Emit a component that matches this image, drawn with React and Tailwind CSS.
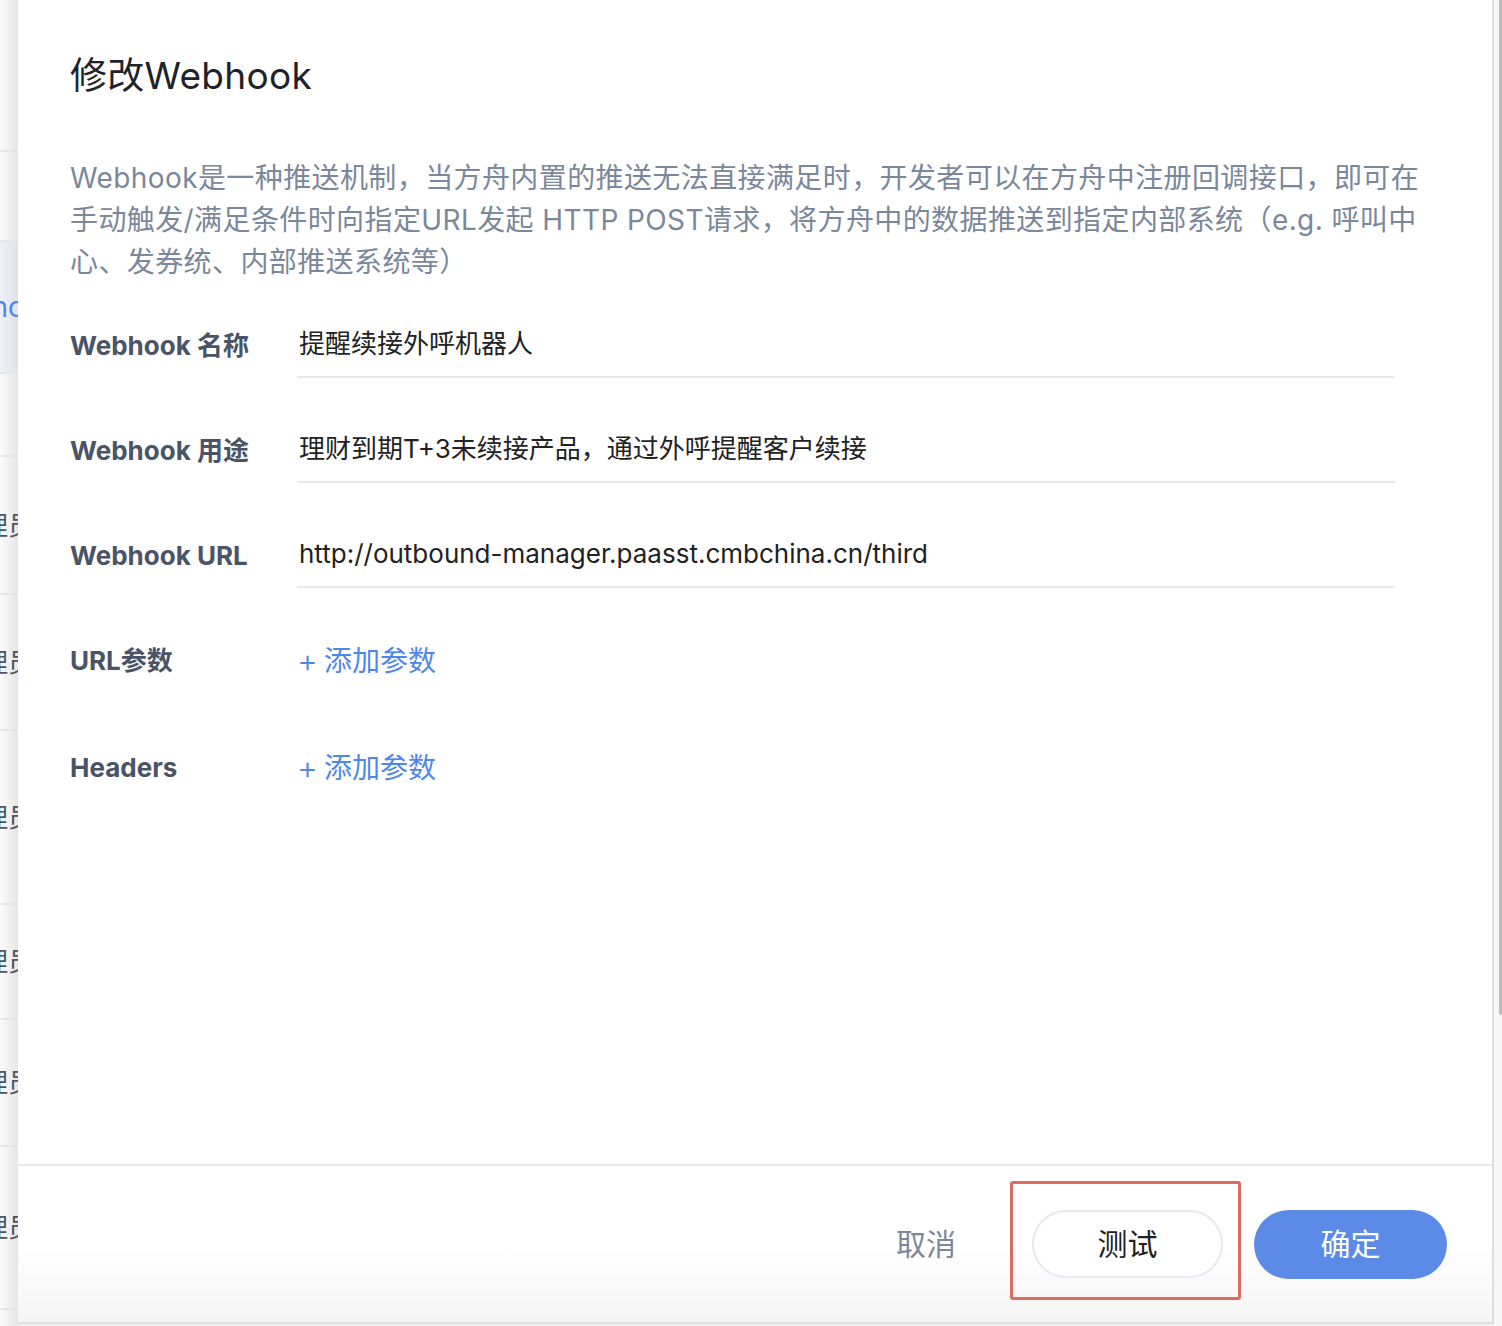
const font = { fontFamily: 'Inter, "Noto Sans CJK SC", sans-serif' };

const sideRows = [
  { h: "h-[150px]" },
  { h: "h-[90px]" },
  { h: "h-[132px]", text: "Func", active: true },
  { h: "h-[83px]" },
  { h: "h-[138px]", text: "管理员" },
  { h: "h-[136px]", text: "管理员" },
  { h: "h-[174px]", text: "管理员" },
  { h: "h-[115px]", text: "管理员" },
  { h: "h-[127px]", text: "管理员" },
  { h: "h-[163px]", text: "管理员" },
  { h: "h-[18px]" },
];

function SideStrip() {
  return (
    <div className="w-[18px] shrink-0 overflow-hidden flex flex-col">
      {sideRows.map((r, i) => (
        <div
          key={i}
          className={`${r.h} shrink-0 flex items-center ${i > 0 ? "border-t-2 border-[#e4e6ea]" : ""} ${
            r.active
              ? "bg-linear-to-r from-[#eef1f6] to-[#dfe2e7]"
              : "bg-linear-to-r from-[#fbfbfb] to-[#e6e6e7]"
          }`}
        >
          {r.text && (
            <div className="w-[234px] -ml-[200px] shrink-0 text-right">
              <span
                className={`whitespace-nowrap ${
                  r.active ? "text-[28px] text-[#4f86ec] pr-[10px]" : "text-[26px] text-[#4b5563]"
                }`}
              >
                {r.text}
              </span>
            </div>
          )}
        </div>
      ))}
    </div>
  );
}

function Row({ label, children, underline = true }) {
  return (
    <div className="flex w-[1325px] mt-[51px] first:mt-0">
      <div className="w-[227px] shrink-0 text-[26px] leading-[40px] pt-[2px] font-bold text-[#4a5466]">{label}</div>
      <div
        className={`flex-1 pl-[2px] pb-[12px] border-b-2 ${
          underline ? "border-[#e6e9ee]" : "border-transparent"
        }`}
      >
        {children}
      </div>
    </div>
  );
}

function AddParam() {
  return (
    <button className="flex items-center h-[40px] mt-[2px] text-[28px] leading-[40px] text-[#4f86ec] -ml-[2px]">
      <span className="text-[32px] leading-none font-light mr-[6px]">+</span>添加参数
    </button>
  );
}

export default function App() {
  return (
    <div className="flex h-[1326px] w-full bg-[#efefef] overflow-hidden" style={font}>
      <SideStrip />

      <div className="flex-1 flex flex-col h-[1324px] bg-white border-r-2 border-b-2 border-[#dedede]">
        {/* body */}
        <div className="flex-1 pl-[52px] pt-[52px]">
          <h1 className="text-[37px] leading-[48px] tracking-[0.3px] text-[#1f2329] font-normal">修改Webhook</h1>

          <div className="mt-[57px] text-[28px] leading-[42px] tracking-[0.4px] text-[#7b879a] whitespace-nowrap">
            <p>Webhook是一种推送机制，当方舟内置的推送无法直接满足时，开发者可以在方舟中注册回调接口，即可在</p>
            <p>手动触发/满足条件时向指定URL发起 HTTP POST请求，将方舟中的数据推送到指定内部系统（e.g. 呼叫中</p>
            <p>心、发券统、内部推送系统等）</p>
          </div>

          <div className="mt-[41px]">
            <Row label="Webhook 名称">
              <p className="text-[26px] leading-[40px] text-[#222]">提醒续接外呼机器人</p>
            </Row>
            <Row label="Webhook 用途">
              <p className="text-[26px] leading-[40px] text-[#222]">理财到期T+3未续接产品，通过外呼提醒客户续接</p>
            </Row>
            <Row label="Webhook URL">
              <p className="text-[26px] leading-[40px] text-[#222]">http://outbound-manager.paasst.cmbchina.cn/third</p>
            </Row>
            <Row label="URL参数" underline={false}>
              <AddParam />
            </Row>
            <Row label="Headers" underline={false}>
              <AddParam />
            </Row>
          </div>
        </div>

        {/* footer */}
        <div className="h-[158px] shrink-0 border-t-2 border-[#e6e9ee] bg-linear-to-b from-white via-white to-[#f5f5f5] flex items-center justify-end pr-[45px]">
          <button className="w-[120px] text-[30px] leading-[68px] text-[#7d8799]">取消</button>
          <div className="relative ml-[46px]">
            <button className="w-[191px] h-[68px] rounded-full border-2 border-[#e6e9ef] bg-white text-[30px] text-[#222]">
              测试
            </button>
            <div className="absolute -left-[22px] -right-[18px] -top-[29px] -bottom-[22px] border-[3px] border-[#dd6b5f] rounded-[3px] pointer-events-none" />
          </div>
          <button className="ml-[31px] w-[193px] h-[69px] rounded-full bg-[#5b8ae7] text-[30px] text-white">
            确定
          </button>
        </div>
      </div>

      {/* scrollbar */}
      <div className="w-[8px] shrink-0 bg-[#f7f7f7] flex justify-end">
        <div className="w-[3px] h-[1015px] bg-[#bdbdbd] rounded-b-full" />
      </div>
    </div>
  );
}
